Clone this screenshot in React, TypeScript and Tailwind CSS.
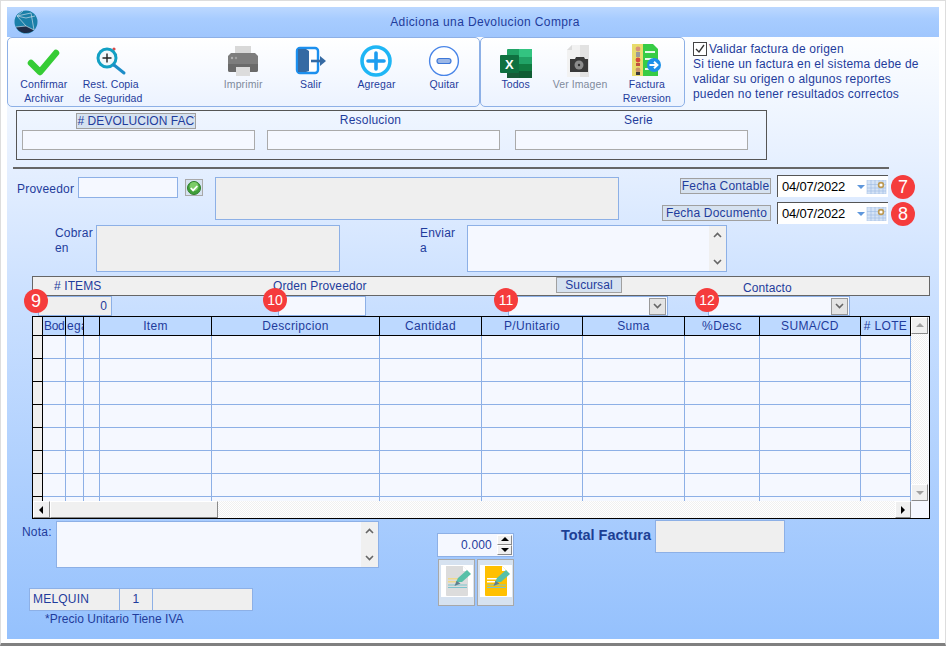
import type { ReactNode } from "react";

const Globe = () => (
  <svg width="24" height="24" viewBox="0 0 24 24">
    <circle cx="12" cy="12" r="11.5" fill="#1a7fa8" />
    <path d="M2 17a11.5 11.5 0 0 0 18 3L12 16z" fill="#1e2c48" />
    <path d="M3 6l9 10 8 4M3 6l14-3M17 3l3 17M12 16L2 17M3 6l6-5M3 6l9 2 9-2" fill="none" stroke="#c8dbe8" strokeWidth=".7" />
  </svg>
);

const CheckIcon = () => (
  <svg width="34" height="34" viewBox="0 0 34 34">
    <path d="M4 19l9 9L29 9" fill="none" stroke="#35cc35" strokeWidth="6.5" strokeLinecap="round" strokeLinejoin="round" />
  </svg>
);

const SearchIcon = () => (
  <svg width="34" height="34" viewBox="0 0 34 34">
    <circle cx="20" cy="5" r="1.6" fill="#d84a4a" />
    <circle cx="22" cy="11" r="1.2" fill="#e05a5a" />
    <circle cx="13" cy="14" r="9" fill="#f2f8fb" stroke="#12a0c4" strokeWidth="3" />
    <path d="M13 9.5v9M8.5 14h9" stroke="#222" strokeWidth="1.4" />
    <path d="M20 21l10 8" stroke="#1c8cc8" strokeWidth="3" strokeLinecap="round" />
  </svg>
);

const PrinterIcon = () => (
  <svg width="34" height="34" viewBox="0 0 34 34">
    <path d="M9 2h16v8H9z" fill="#d8d8d8" />
    <path d="M5 9h24l3 3v14a2 2 0 0 1-2 2H4a2 2 0 0 1-2-2V12z" fill="#7d7d7d" />
    <path d="M2 20h30v6a2 2 0 0 1-2 2H4a2 2 0 0 1-2-2z" fill="#6a6a6a" />
    <path d="M10 23h14v9H10z" fill="#dcdcdc" />
    <circle cx="6" cy="14" r="1.2" fill="#b0b0b0" />
    <circle cx="10" cy="14" r="1.2" fill="#a0a0a0" />
  </svg>
);

const ExitIcon = () => (
  <svg width="34" height="34" viewBox="0 0 34 34">
    <rect x="3" y="4" width="21" height="25" rx="3" fill="#fff" stroke="#1c8fee" strokeWidth="2.4" />
    <path d="M4 5h8l3 2v20l-3 1H4z" fill="#356aa3" />
    <path d="M17 17h11" stroke="#356aa3" strokeWidth="2.6" />
    <path d="M26 12l6 5-6 5z" fill="#356aa3" />
  </svg>
);

const PlusIcon = () => (
  <svg width="34" height="34" viewBox="0 0 34 34">
    <circle cx="17" cy="17" r="14" fill="#fff" stroke="#1fb6f5" strokeWidth="3.6" />
    <path d="M17 9v16M9 17h16" stroke="#1d9df0" strokeWidth="3.6" strokeLinecap="round" />
  </svg>
);

const MinusIcon = () => (
  <svg width="34" height="34" viewBox="0 0 34 34">
    <circle cx="17" cy="17" r="14.4" fill="#fff" stroke="#4a86e8" strokeWidth="1.4" />
    <rect x="10" y="14.5" width="14" height="5" rx="2.5" fill="#9db8e6" stroke="#3f78d8" strokeWidth="1.2" />
  </svg>
);

const ExcelIcon = () => (
  <svg width="32" height="30" viewBox="0 0 32 30" className="mt-[6px]">
    <rect x="7" y="0" width="25" height="29" rx="1" fill="#21a366" />
    <rect x="19" y="0" width="13" height="8" fill="#33c481" />
    <rect x="19" y="15" width="13" height="7" fill="#107c41" />
    <rect x="7" y="15" width="12" height="14" fill="#185c37" />
    <rect x="19" y="22" width="13" height="7" fill="#0f5c33" />
    <rect x="0" y="6" width="19" height="18" rx="1" fill="#0f7040" />
    <text x="9.5" y="20" textAnchor="middle" fontSize="13" fontWeight="700" fill="#fff" fontFamily="Liberation Sans">X</text>
  </svg>
);

const ImageIcon = () => (
  <svg width="34" height="34" viewBox="0 0 34 34">
    <path d="M4 6l5-5h8v32H4z" fill="#f2f2f2" />
    <path d="M17 1h9v32h-9z" fill="#e2e2e2" />
    <path d="M9 1v5H4z" fill="#dcdcdc" />
    <path d="M7 15h5l1-2h8l1 2h3v13H7z" fill="#3a3a3a" />
    <circle cx="16" cy="21" r="4.5" fill="#8c8c8c" />
    <circle cx="16" cy="21" r="1.2" fill="#333" />
  </svg>
);

const ReversalIcon = () => (
  <svg width="34" height="34" viewBox="0 0 34 34">
    <rect x="2" y="0" width="12" height="32" fill="#e8dc6c" />
    <path d="M13 0h10l5 5v27H13z" fill="#37cc45" />
    <path d="M15 7h10v2H15zM15 14h8v2h-8zM15 24h8v2h-8z" fill="#e8f8e8" />
    <circle cx="8" cy="5" r="2.4" fill="#d8927a" />
    <rect x="6" y="8" width="4" height="5" fill="#9a9a9a" />
    <circle cx="8" cy="16" r="2.4" fill="#d84a3a" />
    <rect x="6" y="19" width="4" height="3" fill="#c05040" />
    <circle cx="8" cy="26" r="2.4" fill="#c89068" />
    <rect x="6" y="28" width="4" height="3" fill="#3a3a3a" />
    <circle cx="24" cy="21" r="7" fill="#1e90e8" />
    <path d="M19.5 21h7M24 17.8l3.4 3.2-3.4 3.2" fill="none" stroke="#fff" strokeWidth="2" />
  </svg>
);

const OkIcon = () => (
  <svg width="14" height="14" viewBox="0 0 14 14">
    <circle cx="7" cy="7" r="6.5" fill="#3f9f3a" stroke="#2e7c2c" />
    <circle cx="7" cy="5.5" r="4.5" fill="#7ccc68" />
    <path d="M3.8 7l2.3 2.4 4.2-4.4" fill="none" stroke="#fff" strokeWidth="1.7" />
  </svg>
);

const CalendarIcon = () => (
  <svg width="30" height="14" viewBox="0 0 30 14">
    <path d="M0 5h8l-4 4z" fill="#5f97dc" />
    <rect x="10" y="0" width="19" height="14" fill="#d5e3f6" stroke="#a9c3e6" strokeWidth=".6" />
    <path d="M10 4.5h19M10 8h19M10 11h19M14 0v14M18 0v14M22 0v14M26 0v14" stroke="#9cbbe2" strokeWidth=".6" />
    <circle cx="24" cy="5" r="2.4" fill="#fff" stroke="#bd9a52" strokeWidth="1.6" />
  </svg>
);

const EditDocIcon = ({ color, line }: { color: string; line: string }) => (
  <svg width="32" height="32" viewBox="0 0 32 32" className="bg-white">
    <path d="M5 1h17l5 5v24a1 1 0 0 1-1 1H6a1 1 0 0 1-1-1z" fill={color} />
    <path d="M22 1v5h5z" fill="#fff" />
    <path d="M7 13h13v1.6H7zM7 16h8v1.4H7z" fill={line} />
    <path d="M7 20h19M7 22.5h19" stroke="#7cc4cc" strokeWidth="1.2" />
    <path d="M15 17l2-4 9-8 4 4-9 8z" fill="#57c0a8" />
    <path d="M13.5 21l2-5 4 2.5z" fill="#5f7f8c" />
  </svg>
);

const Arrow = ({ dir }: { dir: "up" | "down" }) => (
  <svg width="9" height="6" viewBox="0 0 9 6">
    <path d={dir === "up" ? "M1 5l3.5-3.5L8 5" : "M1 1l3.5 3.5L8 1"} fill="none" stroke="#666" strokeWidth="1.6" />
  </svg>
);

const Tri = ({ dir, color = "#000" }: { dir: "up" | "down" | "left" | "right"; color?: string }) => {
  const d = { up: "M0 5l4-4 4 4z", down: "M0 2h8l-4 4z", left: "M5 0v8L1 4z", right: "M2 0v8l4-4z" }[dir];
  return (
    <svg width="8" height="8" viewBox="0 0 8 8">
      <path d={d} fill={color} />
    </svg>
  );
};

const Badge = ({ n, className }: { n: string; className: string }) => (
  <div
    className={`absolute w-6 h-6 rounded-full bg-[#f53c3c] text-white tracking-normal flex items-center justify-center ${
      n.length > 1 ? "text-[14px]" : "text-[18px]"
    } ${className}`}
  >
    {n}
  </div>
);

const ToolButton = ({
  icon,
  label,
  w,
  muted,
}: {
  icon: ReactNode;
  label: string[];
  w: string;
  muted?: boolean;
}) => (
  <div className={`flex flex-col items-center pt-[6px] ${w}`}>
    <div className="h-[33px] flex items-center justify-center">{icon}</div>
    <div className={`text-[10.5px] tracking-[0.1px] leading-[14px] text-center whitespace-nowrap ${muted ? "text-[#7f8a9c]" : ""}`}>
      {label.map((l) => (
        <div key={l}>{l}</div>
      ))}
    </div>
  </div>
);

const Scroller = () => (
  <div className="w-[17px] h-full shrink-0 bg-[#f0f0f0] flex flex-col items-center justify-between py-[6px]">
    <Arrow dir="up" />
    <Arrow dir="down" />
  </div>
);

const Raised = ({ className, children }: { className: string; children?: ReactNode }) => (
  <div
    className={`shrink-0 flex items-center justify-center bg-[#f0f0f0] border border-t-white border-l-white border-r-[#8a8a8a] border-b-[#8a8a8a] ${className}`}
  >
    {children}
  </div>
);

const columns = [
  { name: "Bod", cls: "text-left pl-px tracking-[-0.3px]" },
  { name: "ega", cls: "text-left pl-px" },
  { name: "", cls: "" },
  { name: "Item", cls: "text-center" },
  { name: "Descripcion", cls: "text-center" },
  { name: "Cantidad", cls: "text-center" },
  { name: "P/Unitario", cls: "text-center" },
  { name: "Suma", cls: "text-center" },
  { name: "%Desc", cls: "text-center" },
  { name: "SUMA/CD", cls: "text-center" },
  { name: "# LOTE", cls: "text-center" },
];

const gridCols = "grid grid-cols-[10px_23px_18px_16px_112px_168px_102px_101px_102px_75px_101px_50px]";

const rows = [0, 1, 2, 3, 4, 5, 6];

const inputCls = "h-5 bg-[#f5f8ff] border border-[#8db0e6]";
const boxInput = "h-5 w-[233px] bg-[#f5f8ff] border border-[#aaaaaa]";
const tagCls = "bg-[#d6e2f0] border border-[#a0a0a0] h-[16px] flex items-center justify-center leading-none whitespace-nowrap";
const dither = "bg-[repeating-conic-gradient(#ffffff_0_25%,#f0f0f0_0_50%)] bg-[length:2px_2px]";

const App = () => {
  return (
    <div className="w-[946px] h-[646px] overflow-hidden bg-white border-t border-x border-[#dddddd] border-b-[3px] border-b-[#808080] pt-[6px] pl-[6px] font-['Liberation_Sans',Arial,sans-serif] text-[12px] tracking-[0.2px] text-[#1f3c9c]">
      <div className="w-[932px] h-[632px] flex flex-col bg-[linear-gradient(#fdfeff_30px,#e3eeff_170px,#c9dfff_300px,#95c1fd_632px)]">
        {/* titulo */}
        <div className="relative h-[30px] shrink-0 flex items-center justify-center pl-[24px] tracking-[0.38px] bg-[linear-gradient(#bcd8ff,#a7ccff_40%,#9fc6fd)]">
          <div className="absolute left-[7px] top-[3px]">
            <Globe />
          </div>
          Adiciona una Devolucion Compra
        </div>

        {/* barra de herramientas */}
        <div className="h-[70px] shrink-0 flex">
          <div className="w-[473px] flex rounded-[5px] border border-[#8db0e6] bg-[linear-gradient(#ffffff,#ecf3ff)]">
            <ToolButton icon={<CheckIcon />} label={["Confirmar", "Archivar"]} w="w-[72px]" />
            <ToolButton icon={<SearchIcon />} label={["Rest. Copia", "de Seguridad"]} w="w-[62px]" />
            <div className="w-[67px]" />
            <ToolButton icon={<PrinterIcon />} label={["Imprimir"]} w="w-[70px]" muted />
            <ToolButton icon={<ExitIcon />} label={["Salir"]} w="w-[66px]" />
            <ToolButton icon={<PlusIcon />} label={["Agregar"]} w="w-[66px]" />
            <ToolButton icon={<MinusIcon />} label={["Quitar"]} w="w-[70px]" />
          </div>
          <div className="w-[205px] flex rounded-[5px] border border-[#8db0e6] bg-[linear-gradient(#ffffff,#ecf3ff)]">
            <ToolButton icon={<ExcelIcon />} label={["Todos"]} w="w-[70px]" />
            <ToolButton icon={<ImageIcon />} label={["Ver Imagen"]} w="w-[60px]" muted />
            <ToolButton icon={<ReversalIcon />} label={["Factura", "Reversion"]} w="w-[75px]" />
          </div>
          <div className="ml-[8px] pt-[5px]">
            <div className="flex items-center h-[14px] gap-[2px]">
              <div className="w-[14px] h-[14px] bg-white border border-[#444] flex items-center justify-center">
                <svg width="10" height="10" viewBox="0 0 10 10">
                  <path d="M1 5l3 3 5-7" fill="none" stroke="#333" strokeWidth="1.3" />
                </svg>
              </div>
              <span>Validar factura de origen</span>
            </div>
            <div className="mt-px leading-[15px] whitespace-nowrap">
              Si tiene un factura en el sistema debe de
              <br />
              validar su origen o algunos reportes
              <br />
              pueden no tener resultados correctos
            </div>
          </div>
        </div>

        {/* numero de devolucion */}
        <div className="mt-[3px] ml-[9px] w-[751px] h-[50px] shrink-0 border border-[#555555] px-[5px] pt-[2px]">
          <div className="flex gap-[12px]">
            <div className="w-[233px] flex justify-center pr-[6px]">
              <div className={`${tagCls} w-[120px] overflow-hidden justify-start pl-px tracking-[0.05px]`}>
                # DEVOLUCION FACT
              </div>
            </div>
            <div className="w-[233px] h-[16px] text-center leading-[14px] pr-[26px]">Resolucion</div>
            <div className="w-[233px] ml-[3px] h-[16px] text-center leading-[14px] pl-[14px]">Serie</div>
          </div>
          <div className="flex gap-[12px] mt-[1px]">
            <div className={boxInput} />
            <div className={boxInput} />
            <div className={`${boxInput} ml-[3px]`} />
          </div>
        </div>

        <div className="mt-[7px] ml-[6px] w-[876px] h-[2px] shrink-0 bg-[#666666]" />

        {/* proveedor y fechas */}
        <div className="mt-[6px] h-[50px] shrink-0 flex">
          <div className="ml-[10px] w-[61px] pt-[5px]">Proveedor</div>
          <div className={`w-[100px] mt-[2px] h-[21px] ${inputCls}`} />
          <div className="ml-[7px] mt-[4px] w-[18px] h-[17px] bg-[#d6e2f0] border border-[#a8a8a8] flex items-center justify-center">
            <OkIcon />
          </div>
          <div className="ml-[12px] mt-[2px] w-[404px] h-[43px] bg-[#efefef] border border-[#8db0e6]" />
          <div className="relative ml-[43px] w-[226px] flex flex-col items-end">
            <div className="flex h-[22px] items-center">
              <div className={`${tagCls} w-[91px] shrink-0`}>Fecha Contable</div>
              <DateBox />
            </div>
            <div className="flex h-[22px] mt-[5px] items-center">
              <div className={`${tagCls} w-[109px] shrink-0`}>Fecha Documento</div>
              <DateBox />
            </div>
            <Badge n="7" className="right-[-27px] top-0" />
            <Badge n="8" className="right-[-27px] top-[27px]" />
          </div>
        </div>

        {/* cobrar / enviar */}
        <div className="h-[47px] shrink-0 flex">
          <div className="ml-[48px] w-[41px] pt-[1px] leading-[15px]">
            Cobrar
            <br />
            en
          </div>
          <div className="w-[244px] h-full bg-[#efefef] border border-[#8db0e6]" />
          <div className="ml-[80px] w-[47px] pt-[1px] leading-[15px]">
            Enviar
            <br />a
          </div>
          <div className="w-[260px] h-full bg-[#f5f8ff] border border-[#8db0e6] flex justify-end">
            <Scroller />
          </div>
        </div>

        {/* barra de titulos */}
        <div className="mt-[4px] ml-[25px] w-[898px] h-[20px] shrink-0 bg-[#f0f0f0] border border-[#666666] flex tracking-[0.1px]">
          <div className="ml-[21px] w-[219px] leading-[18px]"># ITEMS</div>
          <div className="w-[283px] leading-[18px]">Orden Proveedor</div>
          <div className={`${tagCls} w-[66px] bg-[#d6e2f0] border-[#999999]`}>Sucursal</div>
          <div className="ml-[121px] pt-[2px] leading-[18px]">Contacto</div>
        </div>

        {/* campos de la barra */}
        <div className="relative h-5 shrink-0 flex">
          <div className="ml-[31px] w-[74px] h-5 bg-[#efefef] border border-[#8db0e6] text-right pr-[4px] leading-[18px]">0</div>
          <div className={`ml-[166px] w-[88px] ${inputCls}`} />
          <ComboBox className="ml-[142px] w-[160px]" />
          <ComboBox className="ml-[40px] w-[142px]" />
          <Badge n="9" className="left-[17px] top-[-7px]" />
          <Badge n="10" className="left-[256px] top-[-8px]" />
          <Badge n="11" className="left-[487px] top-[-8px]" />
          <Badge n="12" className="left-[688px] top-[-8px]" />
        </div>

        {/* detalle */}
        <div className="ml-[25px] w-[898px] h-[203px] shrink-0 border-[1.5px] border-black bg-[#f5f8ff] flex flex-col overflow-hidden tracking-[0.35px]">
          <div className="flex h-[184px] shrink-0">
            <div className="w-[878px] shrink-0 overflow-hidden">
              <div className={`${gridCols} h-[19px] border-b border-black`}>
                <div className="h-[18px] bg-[#efefef] border-r border-black" />
                {columns.map((c, i) => (
                  <div
                    key={i}
                    className={`h-[18px] bg-[#bdd9ff] border-r border-black leading-[19px] whitespace-nowrap overflow-hidden ${c.cls}`}
                  >
                    {c.name}
                  </div>
                ))}
              </div>
              {rows.map((r) => (
                <div key={r} className={`${gridCols} h-[23px]`}>
                  <div className="bg-[#efefef] border-r border-b border-black" />
                  {columns.map((c, i) => (
                    <div key={i} className="border-r border-b border-[#8db0e6]" />
                  ))}
                </div>
              ))}
              <div className={`${gridCols} h-[4px]`}>
                <div className="bg-[#efefef] border-r border-black" />
                {columns.map((c, i) => (
                  <div key={i} className="border-r border-[#8db0e6]" />
                ))}
              </div>
            </div>
            <div className={`w-[17px] flex flex-col ${dither}`}>
              <Raised className="h-[17px]">
                <Tri dir="up" color="#a0a0a0" />
              </Raised>
              <div className="flex-1" />
              <Raised className="h-[17px]">
                <Tri dir="down" color="#a0a0a0" />
              </Raised>
            </div>
          </div>
          <div className="flex flex-1 min-h-0">
            <div className={`w-[878px] flex ${dither}`}>
              <Raised className="w-[17px]">
                <Tri dir="left" />
              </Raised>
              <Raised className="w-[168px]" />
              <div className="flex-1" />
              <Raised className="w-[16px]">
                <Tri dir="right" />
              </Raised>
            </div>
          </div>
        </div>

        {/* pie */}
        <div className="flex-1 flex">
          <div className="ml-[15px] w-[357px]">
            <div className="mt-[2px] flex h-[47px]">
              <div className="w-[34px] pt-[2px]">Nota:</div>
              <div className="w-[323px] bg-[#f5f8ff] border border-[#8db0e6] flex justify-end">
                <Scroller />
              </div>
            </div>
            <div className="ml-[7px] mt-[20px] flex h-[23px]">
              <div className="w-[91px] bg-[#efefef] border border-[#8db0e6] pl-[3px] leading-[20px]">MELQUIN</div>
              <div className="w-[33px] bg-[#efefef] border-y border-r border-[#8db0e6] text-center leading-[20px]">1</div>
              <div className="w-[100px] bg-[#efefef] border-y border-r border-[#8db0e6]" />
            </div>
            <div className="ml-[23px] mt-[1px] leading-[15px] tracking-[0.03px]">*Precio Unitario Tiene IVA</div>
          </div>
          <div className="ml-[58px] mt-[14px] w-[78px]">
            <div className="h-[24px] w-[77px] bg-[#f5f8ff] border border-[#8db0e6] flex items-center justify-end pr-px">
              <span className="mr-[5px]">0.000</span>
              <div className="flex flex-col">
                <Raised className="w-[15px] h-[10px] border-[#999999]">
                  <Tri dir="up" />
                </Raised>
                <Raised className="w-[15px] h-[10px] border-[#999999]">
                  <Tri dir="down" />
                </Raised>
              </div>
            </div>
            <div className="mt-[2px] flex gap-[2px] ml-px">
              <div className="w-[37px] h-[47px] bg-[#d6e2f0] border border-[#a8a8a8] flex justify-center pt-[5px]">
                <EditDocIcon color="#dcdcdc" line="#f0d98c" />
              </div>
              <div className="w-[37px] h-[47px] bg-[#d6e2f0] border border-[#a8a8a8] flex justify-center pt-[5px]">
                <EditDocIcon color="#ffc000" line="#ffffff" />
              </div>
            </div>
          </div>
          <div className="ml-[46px] mt-[6px] w-[94px] text-[14.5px] font-bold tracking-normal text-[#1c3f94] whitespace-nowrap">
            Total Factura
          </div>
          <div className="mt-px w-[130px] h-[33px] bg-[#efefef] border border-[#8db0e6]" />
        </div>
      </div>
    </div>
  );
};

const DateBox = () => (
  <div className="ml-[6px] w-[111px] h-[22px] bg-white border-l border-t border-[#555555] flex items-center justify-between pl-[4px] pr-px tracking-[-0.2px] text-[13px] text-black">
    <span>04/07/2022</span>
    <CalendarIcon />
  </div>
);

const ComboBox = ({ className }: { className: string }) => (
  <div className={`${className} ${inputCls} flex items-center justify-end pr-[1px]`}>
    <div className="w-[17px] h-[17px] bg-[#e4e4e4] border border-[#999999] flex items-center justify-center">
      <Arrow dir="down" />
    </div>
  </div>
);

export default App;
